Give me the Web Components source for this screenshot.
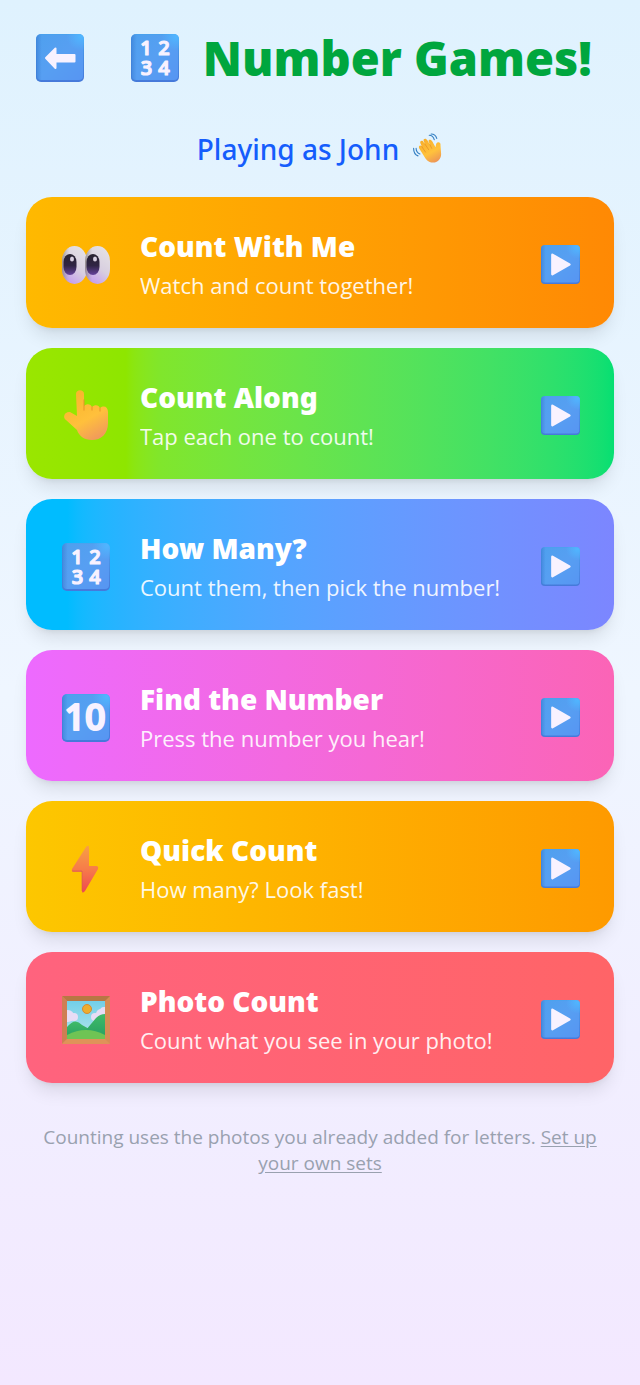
<!DOCTYPE html>
<html lang="en">
<head>
<meta charset="utf-8">
<meta name="viewport" content="width=device-width, initial-scale=1">
<title>Number Games!</title>
<style>
  html { min-height: 100%; background: linear-gradient(to bottom, #dff2fe, #eff6ff 50%, #f3e8ff); }
  body { margin: 0; font-family: "Open Sans", "Noto Sans", sans-serif; }
</style>
</head>
<body>
<number-games-page></number-games-page>

<script>
const tile = (inner) => `
  <defs>
    <linearGradient id="face" x1="0" y1="0" x2="1" y2="1"><stop offset="0" stop-color="#4ea0ee"/><stop offset=".5" stop-color="#579ff2"/><stop offset="1" stop-color="#5795f2"/></linearGradient>
    <linearGradient id="edge" x1="0" y1="0" x2="0" y2="1"><stop offset="0" stop-color="#4aa2ee"/><stop offset="1" stop-color="#4679da"/></linearGradient>
    <linearGradient id="side"><stop offset="0" stop-color="#3f82d8" stop-opacity=".8"/><stop offset=".12" stop-color="#3f82d8" stop-opacity="0"/></linearGradient>
    <radialGradient id="glow" cx=".94" cy=".05" r=".3"><stop offset="0" stop-color="#50b6ff"/><stop offset="1" stop-color="#50b6ff" stop-opacity="0"/></radialGradient>
  </defs>
  <rect width="48" height="48" rx="5" fill="url(#edge)"/>
  <rect x="1" y="1" width="46" height="45" rx="4" fill="url(#face)"/>
  <rect width="48" height="48" rx="5" fill="url(#side)"/>
  <rect width="48" height="48" rx="5" fill="url(#glow)"/>${inner}`;

const ICONS = {
  back: tile(`<path d="M10 24 19.500 14.500V21H38.500V27.500H19.500V34Z" fill="#f8f2ff" stroke="#f8f2ff" stroke-width="2" stroke-linejoin="round"/>`),
  play: tile(`<path d="M14 12 35 24 14 36Z" fill="#f8f2ff" stroke="#f8f2ff" stroke-width="3" stroke-linejoin="round"/>`),
  numbers: tile(`<g fill="#f8f2ff" stroke="#f8f2ff" stroke-width="1.200" stroke-linejoin="round" font-family="Open Sans, sans-serif" font-weight="600" font-size="20" text-anchor="middle"><text x="15" y="21">1</text><text x="33" y="21">2</text><text x="15.500" y="41">3</text><text x="33" y="41">4</text></g>`),
  ten: tile(`<g fill="#f8f2ff" stroke="#f8f2ff" stroke-width="2" stroke-linejoin="round" font-family="Open Sans, sans-serif" font-weight="600" font-size="36" text-anchor="middle"><text x="23" y="36">10</text></g>`),
  eyes: `
    <defs>
      <linearGradient id="white" x1=".8" y1="0" x2=".3" y2="1"><stop offset="0" stop-color="#e5e2e5"/><stop offset=".55" stop-color="#d8cfe0"/><stop offset="1" stop-color="#c49cef"/></linearGradient>
      <linearGradient id="pupil" x1="0" y1="0" x2="0" y2="1"><stop offset="0" stop-color="#292330"/><stop offset=".55" stop-color="#302544"/><stop offset="1" stop-color="#66439c"/></linearGradient>
      <linearGradient id="shade"><stop offset="0" stop-color="#827c72" stop-opacity=".75"/><stop offset=".3" stop-color="#aaa" stop-opacity="0"/></linearGradient>
    </defs>
    <g id="eye"><rect x="0" y="5" width="25" height="38" rx="12.500" ry="15" fill="url(#white)"/><rect x="0" y="5" width="25" height="38" rx="12.500" ry="15" fill="url(#shade)"/>
    <rect x="1.500" y="13" width="13" height="21" rx="6.500" ry="8" fill="url(#pupil)"/><ellipse cx="10" cy="18" rx="2" ry="2.500" fill="#d8cfe0"/></g>
    <use href="#eye" x="23"/>`,
  finger: `
    <defs><linearGradient id="skin" x1=".2" y1="0" x2=".7" y2="1"><stop offset="0" stop-color="#f8b52b"/><stop offset=".6" stop-color="#ffc03c"/><stop offset="1" stop-color="#f19a5b"/></linearGradient></defs>
    <path d="M14 2C14-3 22-3 22 2V14C25 11 29 12 30 15C33 12 37 13 38 16C42 13 46 15 46 20V31C46 42 39 48 30 48C22 48 17 44 15 38L4 28C0 25 3 19 8 20L15 24Z" fill="url(#skin)"/>
    <path d="M22 8V18M30 15V18M38 16V19" fill="none" stroke="#e78d28" stroke-opacity=".6" stroke-width="1.500" stroke-linecap="round"/>`,
  bolt: `
    <defs><linearGradient id="heat" x1="0" y1="0" x2="0" y2="1"><stop offset="0" stop-color="#f7a044"/><stop offset=".5" stop-color="#f77c49"/><stop offset="1" stop-color="#ee4853"/></linearGradient></defs>
    <path d="M24 2Q27-1 27 3V21H35Q37 22 36 24L23 46Q20 49 20 46V27H11Q9 26 10 24Z" fill="url(#heat)"/>
    <path d="M10 26H20V46" fill="none" stroke="#cf5c50" stroke-opacity=".6"/>`,
  picture: `
    <defs><linearGradient id="sky" x1="0" y1="0" x2="0" y2="1"><stop offset="0" stop-color="#72cfe8"/><stop offset="1" stop-color="#b5e5eb"/></linearGradient>
    <linearGradient id="hill" x1="0" y1="0" x2="0" y2="1"><stop offset="0" stop-color="#40bb68"/><stop offset="1" stop-color="#259e62"/></linearGradient><clipPath id="view"><rect x="5" y="5" width="38" height="38"/></clipPath></defs>
    <rect width="48" height="48" rx="1" fill="#d88b55"/><path d="M0 0H48L43 5H5Z" fill="#b77744"/><path d="M0 0 5 5V43L0 48Z" fill="#cf7e53"/><path d="M0 48 5 43H43L48 48Z" fill="#df9359"/>
    <g clip-path="url(#view)"><rect x="5" y="5" width="38" height="38" fill="url(#sky)"/>
    <circle cx="6" cy="20" r="6" fill="#e8dcf5"/><circle cx="12" cy="21" r="4" fill="#e8dcf5"/><circle cx="39" cy="18" r="5" fill="#e8dcf5"/><circle cx="33" cy="21" r="4" fill="#e8dcf5"/><circle cx="42" cy="15" r="4" fill="#e8dcf5"/>
    <path d="M5 31Q13 21 20 29L29 34V43H5Z" fill="url(#hill)"/><path d="M19 40Q29 28 34 22Q38 18 43 18V43H19Z" fill="url(#hill)"/><path d="M5 39Q24 29 43 39V43H5Z" fill="#6fc454"/></g>
    <circle cx="25" cy="13" r="4.500" fill="#edad2d" stroke="#d78a2f"/>`,
  wave: `
    <defs><linearGradient id="palm" x1=".2" y1="0" x2=".7" y2="1"><stop offset="0" stop-color="#f8ad29"/><stop offset=".6" stop-color="#ffc23c"/><stop offset="1" stop-color="#ed9656"/></linearGradient></defs>
    <path d="M20 39 10 23C8 19 12 17 14 20L12 15C10 11 15 9 17 13L19 16 17 11C16 7 21 6 23 10L27 17 25 12C24 8 29 8 31 12L36 21 37 16C39 11 45 13 44 18L45 32C45 46 29 51 20 39Z" fill="url(#palm)"/>
    <path d="M14 20 20 29M19 16 25 25M27 17 30 23" fill="none" stroke="#e18b25" stroke-opacity=".7" stroke-width="1.500" stroke-linecap="round"/>
    <path d="M26 2Q32 2 34 9M29 0Q36 0 38 7M5 23Q5 29 11 32M1 23Q1 32 8 35" fill="none" stroke="#347fc2" stroke-width="1.800" stroke-linecap="round"/>`
};

class EmojiIcon extends HTMLElement {
  static observedAttributes = ["name"];
  constructor() {
    super();
    this.attachShadow({ mode: "open" });
  }
  attributeChangedCallback(attribute, previous, name) {
    this.shadowRoot.innerHTML = `
      <style>
        :host { display: block; flex: none; width: var(--icon-size, 48px); height: var(--icon-size, 48px); }
        svg { display: block; width: 100%; height: 100%; overflow: visible; }
      </style>
      <svg viewBox="0 0 48 48" aria-hidden="true">${ICONS[name] || ""}</svg>`;
  }
}

class GameCard extends HTMLElement {
  constructor() {
    super();
    this.attachShadow({ mode: "open" }).innerHTML = `
      <style>
        :host { display: block; }
        button {
          display: flex; align-items: center; gap: 30px; box-sizing: border-box;
          width: 100%; padding: 31px 34px 27px 36px; border: 0; border-radius: 26px;
          background: linear-gradient(to right in oklab, var(--from), var(--to));
          box-shadow: 0 12px 18px -4px rgb(0 0 0 / .1), 0 5px 7px -5px rgb(0 0 0 / .1);
          color: #fff; font: inherit; text-align: left; cursor: pointer;
        }
        .words { flex: 1; min-width: 0; display: flex; flex-direction: column; gap: 4px; }
        .name { font-size: 28px; line-height: 37px; font-weight: 900; font-family: "Noto Sans", sans-serif; }
        .hint { font-size: 22px; line-height: 32px; opacity: .9; }
        .play { --icon-size: 39px; }
      </style>
      <button type="button">
        <emoji-icon class="game"></emoji-icon>
        <span class="words"><span class="name"><slot name="name"></slot></span><span class="hint"><slot></slot></span></span>
        <emoji-icon class="play" name="play"></emoji-icon>
      </button>`;
  }
  connectedCallback() {
    this.shadowRoot.querySelector(".game").setAttribute("name", this.getAttribute("icon"));
  }
}

class PageHeader extends HTMLElement {
  constructor() {
    super();
    this.attachShadow({ mode: "open" }).innerHTML = `
      <style>
        :host { display: flex; align-items: center; justify-content: space-between; padding: 0 22px 0 10px; }
        button { padding: 0; border: 0; background: none; cursor: pointer; }
        h1 { display: flex; align-items: center; gap: 24px; margin: 0; color: #00a63e; font-family: "Noto Sans", sans-serif; font-size: 47px; line-height: 64px; font-weight: 900; white-space: nowrap; }
      </style>
      <button type="button" aria-label="Back"><emoji-icon name="back"></emoji-icon></button>
      <h1><emoji-icon name="numbers"></emoji-icon><span><slot></slot></span></h1>`;
  }
}

class PlayerGreeting extends HTMLElement {
  constructor() {
    super();
    this.attachShadow({ mode: "open" }).innerHTML = `
      <style>
        :host { display: block; }
        p { display: flex; align-items: center; justify-content: center; gap: 14px; margin: 0; color: #155dfc; font-family: "Noto Sans", sans-serif; font-size: 28px; line-height: 40px; font-weight: 500; }
        emoji-icon { --icon-size: 30px; }
      </style>
      <p><span><slot></slot></span><emoji-icon name="wave"></emoji-icon></p>`;
  }
}

class SetupNote extends HTMLElement {
  constructor() {
    super();
    this.attachShadow({ mode: "open" }).innerHTML = `
      <style>
        :host { display: block; }
        p { margin: 0; padding: 0 10px; color: #99a1af; font-size: 19px; line-height: 26px; text-align: center; }
        a { color: inherit; text-underline-offset: 2px; }
      </style>
      <p>Counting uses the photos you already added for letters. <a href="#sets">Set up your own sets</a></p>`;
  }
}

class NumberGamesPage extends HTMLElement {
  constructor() {
    super();
    this.attachShadow({ mode: "open" }).innerHTML = `
      <style>
        :host { display: block; padding: 26px; }
        main { display: flex; flex-direction: column; max-width: 880px; margin: 0 auto; }
        player-greeting { margin: 39px 0 28px; }
        .games { display: grid; gap: 20px; }
        setup-note { margin-top: 41px; }
      </style>
      <main>
        <page-header>Number Games!</page-header>
        <player-greeting>Playing as John</player-greeting>
        <section class="games" aria-label="Games">
          <game-card icon="eyes" style="--from:#ffb900;--to:#ff8904"><span slot="name">Count With Me</span>Watch and count together!</game-card>
          <game-card icon="finger" style="--from:#9ae600, #8ee600 17%, #80e62c 23%;--to:#05df72"><span slot="name">Count Along</span>Tap each one to count!</game-card>
          <game-card icon="numbers" style="--from:#00bcff 7%, #28b3ff 16%;--to:#7c86ff"><span slot="name">How Many?</span>Count them, then pick the number!</game-card>
          <game-card icon="ten" style="--from:#ed6aff;--to:#fb64b6"><span slot="name">Find the Number</span>Press the number you hear!</game-card>
          <game-card icon="bolt" style="--from:#fdc700;--to:#fe9a00"><span slot="name">Quick Count</span>How many? Look fast!</game-card>
          <game-card icon="picture" style="--from:#ff637e;--to:#ff6467"><span slot="name">Photo Count</span>Count what you see in your photo!</game-card>
        </section>
        <setup-note></setup-note>
      </main>`;
  }
}

customElements.define("emoji-icon", EmojiIcon);
customElements.define("game-card", GameCard);
customElements.define("page-header", PageHeader);
customElements.define("player-greeting", PlayerGreeting);
customElements.define("setup-note", SetupNote);
customElements.define("number-games-page", NumberGamesPage);
</script>
</body>
</html>
